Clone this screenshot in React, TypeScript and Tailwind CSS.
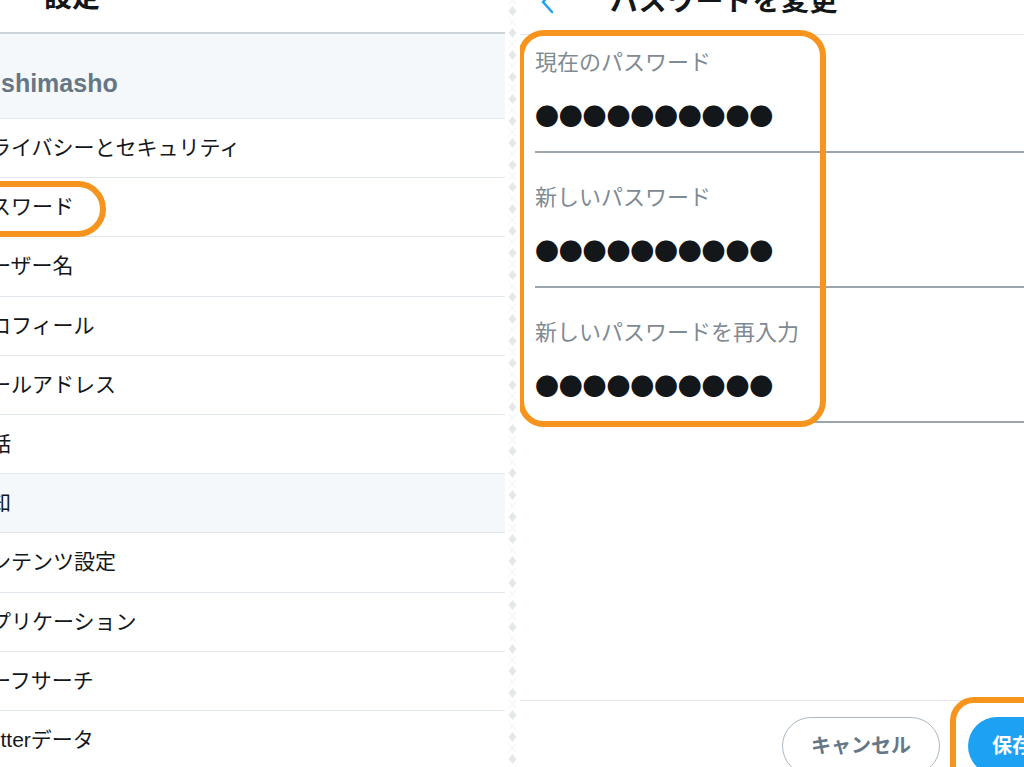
import React from "react";

const settingsItems: { label: string; muted?: boolean }[] = [
	{ label: "プライバシーとセキュリティ" },
	{ label: "パスワード" },
	{ label: "ユーザー名" },
	{ label: "プロフィール" },
	{ label: "メールアドレス" },
	{ label: "電話" },
	{ label: "通知", muted: true },
	{ label: "コンテンツ設定" },
	{ label: "アプリケーション" },
	{ label: "セーフサーチ" },
	{ label: "Twitterデータ" },
	{ label: "" },
];

const passwordFields = ["現在のパスワード", "新しいパスワード", "新しいパスワードを再入力"];

const Divider = () => (
	<div className="w-[15px] shrink-0 bg-white">
		<svg width="15" height="767" className="block">
			<defs>
				<pattern id="diamonds" width="15" height="22" patternUnits="userSpaceOnUse">
					<path d="M7.5 6 L11.5 11 L7.5 16 L3.5 11 Z" fill="#e4e8eb" />
					<path d="M7.5 0 L4 4 M7.5 0 L11 4 M7.5 22 L4 18 M7.5 22 L11 18" stroke="#eef1f3" strokeWidth="1" />
				</pattern>
			</defs>
			<rect width="15" height="767" fill="url(#diamonds)" />
		</svg>
	</div>
);

const SettingsPanel = () => {
	return (
		<div className="relative flex w-[505px] shrink-0 flex-col overflow-hidden">
			<div className="flex h-[34px] shrink-0 items-end border-b-2 border-[#cdd5db] pl-[44px] shadow-[0_1px_2px_rgba(0,0,0,0.06)]">
				<span className="mb-[20px] text-[28px] font-bold leading-[28px] text-[#14171a]">設定</span>
			</div>
			<div className="flex h-[85px] shrink-0 items-end border-b border-[#e1e8ed] bg-[#f5f8fa] pb-[21px]">
				<span className="pl-[1px] text-[25px] font-bold leading-[28px] text-[#657786]">shimasho</span>
			</div>
			{settingsItems.map((item, i) => (
				<div
					key={i}
					className={`flex h-[59.2px] shrink-0 items-center border-b border-[#e1e8ed] ${
						item.muted ? "bg-[#f5f8fa]" : "bg-white"
					}`}
				>
					<span className="-ml-[31px] whitespace-nowrap text-[21px] leading-[24px] text-[#14171a]">{item.label}</span>
				</div>
			))}

			{/* orange annotation around パスワード */}
			<div className="absolute left-[-40px] top-[181px] h-[56px] w-[146px] rounded-full border-[6px] border-[#f7941d]" />
		</div>
	);
};

const PasswordPanel = () => {
	return (
		<div className="relative flex min-w-0 flex-1 flex-col overflow-hidden bg-white">
			<div className="-mt-[31px] flex h-[66px] shrink-0 items-center border-b border-[#e1e8ed] pl-[20px]">
				<svg width="14" height="24" viewBox="0 0 14 24" className="shrink-0">
					<path d="M12 2 L3 12 L12 22" fill="none" stroke="#1da1f2" strokeWidth="2.5" strokeLinecap="round" strokeLinejoin="round" />
				</svg>
				<span className="ml-[56px] whitespace-nowrap text-[28px] font-bold leading-[28px] tracking-[0.5px] text-[#14171a]">
					パスワードを変更
				</span>
			</div>

			{passwordFields.map((label, i) => (
				<div
					key={label}
					className={`ml-[15px] flex shrink-0 flex-col border-b-2 border-[#9ba5ad] pb-[21px] ${i === 0 ? "pt-[15px]" : "pt-[32px]"}`}
				>
					<span className="whitespace-nowrap text-[22px] leading-[26px] text-[#7f8a93]">{label}</span>
					<span className="mt-[24px] whitespace-nowrap font-['Noto_Sans_CJK_JP',sans-serif] text-[24px] leading-[30px] tracking-[-0.2px] text-[#14171a]">
						●●●●●●●●●●
					</span>
				</div>
			))}

			<div className="flex-1" />

			<div className="flex h-[67px] shrink-0 items-start border-t border-[#e1e8ed] pl-[262px] pt-[16px]">
				<button className="flex h-[58px] w-[158px] shrink-0 items-center justify-center rounded-full border-[1.5px] border-[#aab8c2] bg-white text-[20px] font-bold text-[#657786]">
					キャンセル
				</button>
				<button className="ml-[28px] flex h-[58px] w-[88px] shrink-0 items-center justify-center rounded-full bg-[#1da1f2] text-[20px] font-bold text-white">
					保存
				</button>
			</div>

			{/* orange annotations */}
			<div className="absolute left-[-2px] top-[30px] h-[397px] w-[308px] rounded-[26px] border-[6px] border-[#f7941d]" />
			<div className="absolute left-[430px] top-[697px] h-[100px] w-[130px] rounded-[24px] border-[6px] border-[#f7941d]" />
		</div>
	);
};

const App = () => {
	return (
		<div className="flex h-[767px] w-[1024px] overflow-hidden bg-white font-['Liberation_Sans','Noto_Sans_CJK_JP',sans-serif]">
			<SettingsPanel />
			<Divider />
			<PasswordPanel />
		</div>
	);
};

export default App;
